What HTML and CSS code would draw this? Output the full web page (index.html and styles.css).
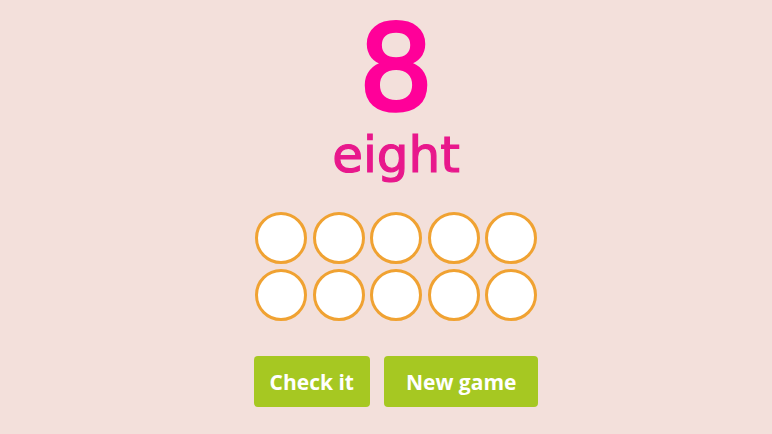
FILE: index.html
```html
<!DOCTYPE html>
<html lang="en">
<head>
  <meta charset="UTF-8">
  <meta name="viewport" content="width=device-width, initial-scale=1.0">
  <title>Count to ten</title>
  <link rel="stylesheet" href="styles.css">
</head>
<body>
  <div class="game">
    <div class="number">8</div>
    <div class="word">eight</div>

    <div class="frame">
      <div class="dot"></div>
      <div class="dot"></div>
      <div class="dot"></div>
      <div class="dot"></div>
      <div class="dot"></div>
      <div class="dot"></div>
      <div class="dot"></div>
      <div class="dot"></div>
      <div class="dot"></div>
      <div class="dot"></div>
    </div>

    <div class="buttons">
      <button type="button" class="btn btn-check">Check it</button>
      <button type="button" class="btn btn-new">New game</button>
    </div>
  </div>
</body>
</html>
```

FILE: styles.css
```css
* {
  margin: 0;
  padding: 0;
  box-sizing: border-box;
}

body {
  background-color: #f3e0db;
  font-family: 'DejaVu Sans', sans-serif;
  min-height: 100vh;
}

.game {
  display: flex;
  flex-direction: column;
  align-items: center;
  padding-top: 8px;
  padding-left: 20px;
}

.number {
  color: #ff0099;
  font-size: 118px;
  font-weight: 400;
  line-height: 120px;
  -webkit-text-stroke: 3.5px #ff0099;
}

.word {
  color: #e8188c;
  font-size: 50px;
  font-weight: 400;
  line-height: 50px;
  margin-top: 2px;
  -webkit-text-stroke: 1.2px #e8188c;
}

.frame {
  display: grid;
  grid-template-columns: repeat(5, 52px);
  gap: 5px 5.5px;
  margin-top: 32px;
}

.dot {
  width: 52px;
  height: 52px;
  border-radius: 50%;
  background: #ffffff;
  border: 3px solid #f0a232;
}

.buttons {
  display: flex;
  gap: 14px;
  margin-top: 35px;
}

.btn {
  height: 51px;
  padding: 0 16px;
  background-color: #a6c822;
  color: #ffffff;
  border: none;
  border-radius: 4px;
  font-family: 'Open Sans', sans-serif;
  font-size: 21px;
  font-weight: 700;
  cursor: pointer;
}

.btn-new {
  padding: 0 22px;
}
```
